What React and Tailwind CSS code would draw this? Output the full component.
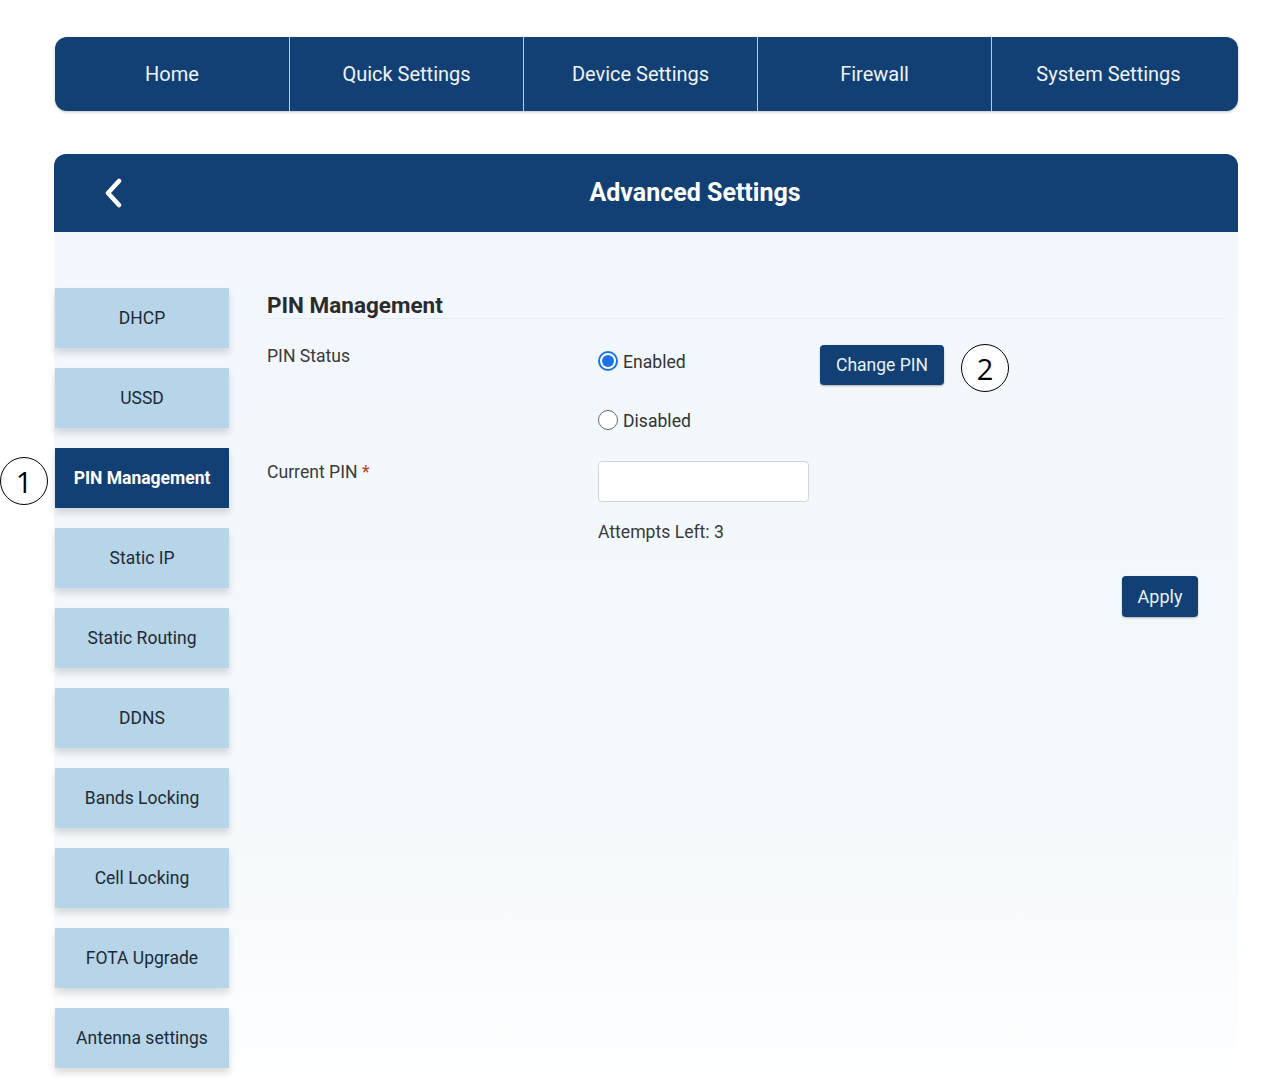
import React from 'react';

const NAV = ['Home', 'Quick Settings', 'Device Settings', 'Firewall', 'System Settings'];
const MENU = ['DHCP', 'USSD', 'PIN Management', 'Static IP', 'Static Routing', 'DDNS', 'Bands Locking', 'Cell Locking', 'FOTA Upgrade', 'Antenna settings'];

const Callout = ({ n, className }) => (
    <div className={`w-[48px] h-[48px] rounded-full border border-black bg-white flex items-center justify-center text-[29px] font-normal text-black font-['Open_Sans',sans-serif] leading-none ${className}`}>
        {n}
    </div>
);

const Radio = ({ checked, label }) => (
    <label className="flex items-center h-[40px] gap-[5px] text-[17.6px] text-[#333] leading-none">
        {checked ? (
            <span className="w-[20px] h-[20px] rounded-full border-2 border-[#1a73e8] bg-white flex items-center justify-center">
                <span className="w-[12px] h-[12px] rounded-full bg-[#1a73e8]" />
            </span>
        ) : (
            <span className="w-[20px] h-[20px] rounded-full border border-[#6b6b6b] bg-white" />
        )}
        <span className="mt-[3px]">{label}</span>
    </label>
);

export default function App() {
    return (
        <div className="min-h-[1080px] bg-white pl-[54px] pt-[37px] font-['Roboto',sans-serif] w-[1262px]">
            {/* top nav */}
            <div className="flex h-[74px] w-[1183px] ml-[1px] rounded-xl overflow-hidden bg-[#134074] shadow-[0_1px_3px_rgba(0,0,0,0.25)]">
                {NAV.map((t, i) => (
                    <div key={t} className={`w-[234px] flex items-center justify-center text-[20px] text-[#eef3f8] ${i > 0 ? 'border-l border-[#b7cde0]' : ''}`}>
                        {t}
                    </div>
                ))}
            </div>

            {/* header */}
            <div className="mt-[43px] w-[1184px] h-[78px] rounded-t-xl bg-[#134074] flex items-center">
                <svg className="ml-[48px] w-[22px] h-[30px]" viewBox="0 0 22 30" fill="none">
                    <path d="M17 3 L6 15 L17 27" stroke="white" strokeWidth="4.5" strokeLinecap="round" strokeLinejoin="round" />
                </svg>
                <div className="flex-1 text-center pl-[28px] text-[25px] font-bold text-white">Advanced Settings</div>
            </div>

            {/* body */}
            <div className="w-[1184px] flex bg-linear-to-b from-[#f1f7fc] via-[#f4f9fc] via-70% to-white pb-[30px]">
                <div className="w-[175px] pl-[1px] pt-[56px] flex flex-col gap-[20px]">
                    {MENU.map((m) => {
                        const active = m === 'PIN Management';
                        return (
                            <div key={m} className={`relative h-[60px] flex items-center justify-center text-[17.5px] shadow-[0_5px_7px_rgba(0,0,0,0.14)] ${active ? 'bg-[#134074] text-white font-bold' : 'bg-[#b6d5e8] text-[#1f2a37]'}`}>
                                {m}
                                {active && <Callout n="1" className="absolute left-[-55px] top-[9px]" />}
                            </div>
                        );
                    })}
                </div>

                <div className="flex-1 pl-[38px] pr-[13px] pt-[60px]">
                    <div className="h-[27px] leading-[26px] text-[22.5px] font-bold text-[#2b2b2b] border-b border-[#e6edf2]">PIN Management</div>

                    {/* PIN status */}
                    <div className="flex mt-[22px]">
                        <div className="w-[331px] pt-[3px] leading-[24px] text-[17.6px] text-[#3a3a3a]">PIN Status</div>
                        <div className="w-[222px] flex flex-col">
                            <Radio checked label="Enabled" />
                            <div className="mt-[19px]">
                                <Radio label="Disabled" />
                            </div>
                        </div>
                        <div className="flex items-start">
                            <button className="mt-[4px] h-[40px] w-[124px] rounded-[4px] bg-[#134074] text-[17.5px] text-[#e9f0f7] shadow-[0_1px_2px_rgba(0,0,0,0.3)]">Change PIN</button>
                            <Callout n="2" className="ml-[17px] mt-[3px]" />
                        </div>
                    </div>

                    {/* current pin */}
                    <div className="flex mt-[20px]">
                        <div className="w-[331px] leading-[24px] text-[17.6px] text-[#3a3a3a]">
                            Current PIN <span className="text-[#c0392b]">*</span>
                        </div>
                        <div className="flex flex-col">
                            <input className="mt-[1px] h-[41px] w-[211px] rounded-[4px] border border-[#d2d6da] bg-white outline-none" />
                            <div className="mt-[18px] leading-[24px] text-[17.6px] text-[#3a3a3a]">Attempts Left: 3</div>
                        </div>
                    </div>

                    <div className="flex justify-end mt-[32px] pr-[27px]">
                        <button className="h-[41px] w-[76px] rounded-[4px] bg-[#134074] text-[18px] text-[#e9f0f7] shadow-[0_1px_2px_rgba(0,0,0,0.3)]">Apply</button>
                    </div>
                </div>
            </div>
        </div>
    );
}
